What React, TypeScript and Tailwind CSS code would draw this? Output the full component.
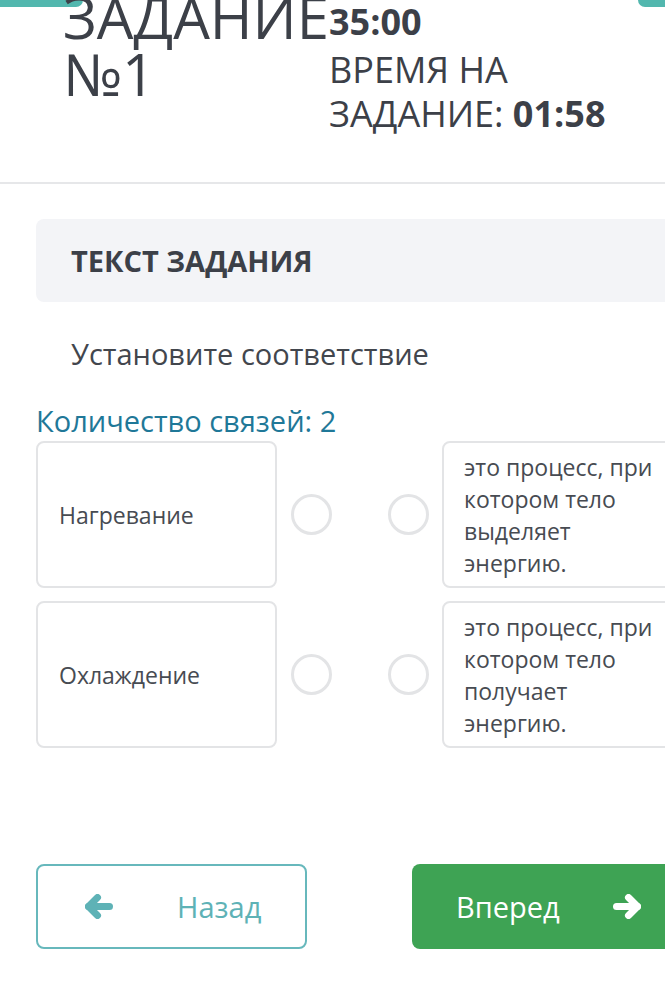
type Pair = {
  left: string;
  right: string;
};

const pairs: Pair[] = [
  { left: "Нагревание", right: "это процесс, при котором тело выделяет энергию." },
  { left: "Охлаждение", right: "это процесс, при котором тело получает энергию." },
];

// chunky arrow like the old font-awesome one
function Arrow({ dir }: { dir: "left" | "right" }) {
  return (
    <svg
      viewBox="0 0 28 25"
      className={`h-[25px] w-[28px] shrink-0 ${dir === "right" ? "-scale-x-100" : ""}`}
      fill="none"
      stroke="currentColor"
      strokeWidth={7}
      strokeLinecap="round"
      strokeLinejoin="round"
    >
      <polyline points="12.5,3.5 3.5,12.5 12.5,21.5" />
      <line x1="3.5" y1="12.5" x2="24.5" y2="12.5" />
    </svg>
  );
}

function MatchRow({ left, right }: Pair) {
  return (
    <div className="flex items-center">
      <div className="flex h-[147px] w-[241px] shrink-0 items-center rounded-lg border-2 border-[#e3e4e6] pl-[21px] text-[23px] leading-[32px] text-[#474b52]">
        {left}
      </div>
      <div className="ml-[14px] h-[41px] w-[41px] shrink-0 rounded-full border-[3px] border-[#e3e4e6]" />
      <div className="ml-[56px] h-[41px] w-[41px] shrink-0 rounded-full border-[3px] border-[#e3e4e6]" />
      <div className="ml-[13px] flex h-[147px] w-[240px] shrink-0 items-center rounded-lg border-2 border-[#e3e4e6] pl-[20px] pr-[14px] text-[23px] leading-[32px] text-[#474b52]">
        {right}
      </div>
    </div>
  );
}

export default function App() {
  return (
    <div className="h-[1005px] w-[665px] overflow-hidden bg-white font-['Open_Sans',sans-serif] text-[#3c4048]">
      <div className="flex h-[7px] justify-between">
        <div className="w-[83px] rounded-br-lg bg-[#52b7ae]" />
        <div className="w-[27px] rounded-bl-lg bg-[#52b7ae]" />
      </div>

      <header className="-mt-[7px] flex border-b-2 border-[#e6e7e9] pb-[46px]">
        <h1 className="-mt-[12px] ml-[63px] w-[266px] shrink-0 whitespace-nowrap text-[58px] font-normal leading-[57px]">
          ЗАДАНИЕ
          <br />
          №1
        </h1>
        <div className="mt-[2px] whitespace-nowrap">
          <div className="text-[36px] font-bold leading-[40px]">35:00</div>
          <div className="mt-[6px] text-[36px] leading-[44px]">
            ВРЕМЯ НА
            <br />
            ЗАДАНИЕ: <span className="font-bold">01:58</span>
          </div>
        </div>
      </header>

      <main className="pl-[36px]">
        <div className="mt-[35px] flex h-[83px] w-[660px] items-center rounded-lg bg-[#f3f4f7] pl-[35px] text-[29px] font-bold">
          ТЕКСТ ЗАДАНИЯ
        </div>

        <p className="mt-[33px] pl-[35px] text-[29px] leading-[38px] text-[#42464d]">
          Установите соответствие
        </p>

        <p className="mt-[29px] text-[29px] leading-[38px] text-[#1f7898]">
          Количество связей: 2
        </p>

        <div className="mt-px flex flex-col gap-[13px]">
          {pairs.map((p) => (
            <MatchRow key={p.left} {...p} />
          ))}
        </div>

        <div className="mt-[116px] flex">
          <button className="flex h-[85px] w-[271px] shrink-0 items-center rounded-lg border-2 border-[#67b8bc] pl-[47px] text-[29px] text-[#5eb2b6]">
            <Arrow dir="left" />
            <span className="ml-[64px]">Назад</span>
          </button>
          <button className="ml-[105px] flex h-[85px] w-[260px] shrink-0 items-center rounded-lg bg-[#3ea354] pl-[44px] text-[29px] text-white">
            <span>Вперед</span>
            <span className="ml-[53px] flex">
              <Arrow dir="right" />
            </span>
          </button>
        </div>
      </main>
    </div>
  );
}
